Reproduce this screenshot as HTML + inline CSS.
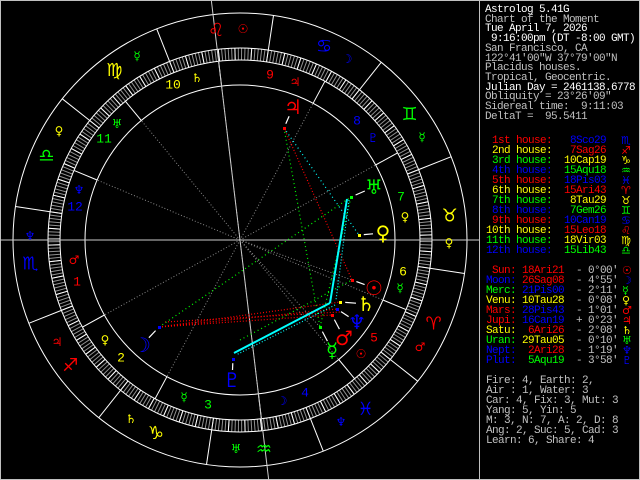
<!DOCTYPE html>
<html><head><meta charset="utf-8"><style>
html,body{margin:0;padding:0;background:#000;}
#w{position:relative;width:640px;height:480px;overflow:hidden;background:#000;}
svg{position:absolute;left:0;top:0;}
.t{position:absolute;font-family:"Liberation Mono","DejaVu Sans Mono",monospace;font-size:11px;letter-spacing:-0.6px;line-height:10px;white-space:pre;color:#c0c0c0;}
.g{position:absolute;font-family:"DejaVu Sans",sans-serif;font-size:11px;line-height:10px;}
.W{color:#fff}.R{color:#f00}.Y{color:#ff0}.G{color:#0f0}.B{color:#00f}.L{color:#c0c0c0}
</style></head><body><div id="w">
<svg id="s" width="640" height="480" xmlns="http://www.w3.org/2000/svg"></svg>
<div class="t" style="left:485px;top:6px;line-height:9.7px"><span class="W">Astrolog 5.41G</span>
Chart of the Moment
<span class="W">Tue April 7, 2026</span>
<span class="W"> 9:16:00pm (DT -8:00 GMT)</span>
San Francisco, CA
122°41'00"W 37°79'00"N
Placidus houses.
Tropical, Geocentric.
<span class="W">Julian Day = 2461138.6778</span>
Obliquity = 23°26'09"
Sidereal time:  9:11:03
DeltaT =  95.5411</div>
<div class="t" style="left:486px;top:136px"><span class="R"> 1st house:</span>  <span class="B"> 8Sco29</span>
<span class="Y"> 2nd house:</span>  <span class="R"> 7Sag26</span>
<span class="G"> 3rd house:</span>  <span class="Y">10Cap19</span>
<span class="B"> 4th house:</span>  <span class="G">15Aqu18</span>
<span class="R"> 5th house:</span>  <span class="B">18Pis03</span>
<span class="Y"> 6th house:</span>  <span class="R">15Ari43</span>
<span class="G"> 7th house:</span>  <span class="Y"> 8Tau29</span>
<span class="B"> 8th house:</span>  <span class="G"> 7Gem26</span>
<span class="R"> 9th house:</span>  <span class="B">10Can19</span>
<span class="Y">10th house:</span>  <span class="R">15Leo18</span>
<span class="G">11th house:</span>  <span class="Y">18Vir03</span>
<span class="B">12th house:</span>  <span class="G">15Lib43</span></div>
<div class="g" style="left:621px;top:136px"><span class="B">♏</span><br><span class="R">♐</span><br><span class="Y">♑</span><br><span class="G">♒</span><br><span class="B">♓</span><br><span class="R">♈</span><br><span class="Y">♉</span><br><span class="G">♊</span><br><span class="B">♋</span><br><span class="R">♌</span><br><span class="Y">♍</span><br><span class="G">♎</span></div>
<div class="t" style="left:486px;top:266px"><span class="R"> Sun:</span> <span class="R">18Ari21</span>  - 0°00'
<span class="B">Moon:</span> <span class="R">26Sag08</span>  - 4°55'
<span class="G">Merc:</span> <span class="B">21Pis00</span>  - 2°11'
<span class="Y">Venu:</span> <span class="Y">10Tau28</span>  - 0°08'
<span class="R">Mars:</span> <span class="B">28Pis43</span>  - 1°01'
<span class="R">Jupi:</span> <span class="B">16Can19</span>  + 0°23'
<span class="Y">Satu:</span> <span class="R"> 6Ari26</span>  - 2°08'
<span class="G">Uran:</span> <span class="Y">29Tau05</span>  - 0°10'
<span class="B">Nept:</span> <span class="R"> 2Ari28</span>  - 1°19'
<span class="B">Plut:</span> <span class="G"> 5Aqu19</span>  - 3°58'</div>
<div class="g" style="left:622px;top:266px"><span class="R">☉</span><br><span class="B">☽</span><br><span class="G">☿</span><br><span class="Y">♀</span><br><span class="R">♂</span><br><span class="R">♃</span><br><span class="Y">♄</span><br><span class="G">♅</span><br><span class="B">♆</span><br><span class="B">♇</span></div>
<div class="t" style="left:486px;top:376px">Fire: 4, Earth: 2,
Air : 1, Water: 3
Car: 4, Fix: 3, Mut: 3
Yang: 5, Yin: 5
M: 3, N: 7, A: 2, D: 8
Ang: 2, Suc: 5, Cad: 3
Learn: 6, Share: 4</div>
</div>
<script>
var s=document.getElementById('s'),h='';
var cx=240,cy=240,asc=218.48,D=Math.PI/180;
function P(L,r){var t=(180+L-asc)*D;return [cx+r*Math.cos(t),cy-r*Math.sin(t)];}
function ln(a,b,c,w,da){h+='<line x1="'+a[0].toFixed(1)+'" y1="'+a[1].toFixed(1)+'" x2="'+b[0].toFixed(1)+'" y2="'+b[1].toFixed(1)+'" stroke="'+c+'" stroke-width="'+(w||1)+'"'+(da?' stroke-dasharray="'+da+'"':'')+'/>';}
function tx(x,y,t,c,f,fam){h+='<text x="'+x+'" y="'+y+'" fill="'+c+'" font-size="'+f+'" text-anchor="middle" dominant-baseline="central" font-family="'+(fam||'DejaVu Sans,sans-serif')+'">'+t+'</text>';}
h+='<rect x="0.5" y="0.5" width="639" height="479" fill="none" stroke="#c0c0c0"/>';
h+='<line x1="479.5" y1="0" x2="479.5" y2="480" stroke="#c0c0c0"/>';
for(var i=0;i<360;i++){ln(P(i,180),P(i,192),'#909090',1);}
for(var i=0;i<360;i+=5){ln(P(i,180),P(i,192),'#fff',1);}
[227,192,180,155].forEach(function(r){h+='<circle cx="240" cy="240" r="'+r+'" fill="none" stroke="#fff"/>';});
for(var i=0;i<12;i++){ln(P(i*30,192),P(i*30,227),'#fff');}
var cusps=[218.48,247.43,280.32,315.3,348.05,15.72,38.48,67.43,100.32,135.3,168.05,195.72];
cusps.forEach(function(L){ln(P(L,155),P(L,180),'#fff');ln([cx,cy],P(L,155),'#888',1,'1 2');});
ln([0,240],[479,240],'#ccc');ln(P(135.3,250),P(315.3,250),'#ccc');
var sg=['♈','♉','♊','♋','♌','♍','♎','♏','♐','♑','♒','♓'],sc=['#f00','#ff0','#0f0','#00f'];
for(var i=0;i<12;i++){var p=P(i*30+15,211);tx(p[0],p[1],sg[i],sc[i%4],18);}
var hc=['#f00','#ff0','#0f0','#00f'];
[[77,282],[121,358],[208,405],[305,393],[374,338],[403,272],[401,197],[357,121],[270,75],[173,85],[104,139],[75,207]].forEach(function(p,i){tx(p[0],p[1],''+(i+1),hc[i%4],13,'Liberation Mono,monospace');});
var sm=[[137,56,'☿','#0f0'],[197,78,'♄','#ff0'],[117,124,'♅','#0f0'],[59,131,'♀','#ff0'],[79,190,'♆','#00f'],[30,236,'♆','#00f'],[243,29,'☉','#f00'],[347,59,'☽','#00f'],[295,82,'♃','#f00'],[373,138,'♇','#00f'],[422,137,'☿','#0f0'],[405,217,'♀','#ff0'],[74,260,'♂','#f00'],[57,342,'♃','#f00'],[105,340,'♀','#ff0'],[184,397,'☿','#0f0'],[131,419,'♄','#ff0'],[236,449,'♅','#0f0'],[449,243,'♀','#ff0'],[400,288,'☿','#0f0'],[420,347,'♂','#f00'],[361,354,'☉','#f00'],[282,401,'☽','#00f'],[341,422,'♆','#00f']];
sm.forEach(function(a){tx(a[0],a[1],a[2],a[3],12);});
var J=[284,128],Su=[352,280],Mo=[159,327],Me=[320,327],Ve=[359,235],Ma=[332,315],Sa=[340,302],Ur=[351,197],Ne=[337,309],Pl=[233,359];
ln(J,Su,'#f00',1.2,'1 2');ln(Mo,Ma,'#f00',1.2,'1 2');ln(Mo,Ne,'#f00',1.2,'1 2');ln(Mo,Sa,'#f00',1.2,'1 2');ln([165,322],[340,312],'#f00',1.2,'1 2');
ln(J,Me,'#0f0',1.2,'1 3');ln(Mo,Ur,'#0f0',1.2,'1 3');ln(Me,[351,197],'#0f0',1.2,'1 3');ln([240,340],Su,'#0f0',1.2,'1 3');
ln(J,Ve,'#0ff',1.2,'1 3');ln([349,200],[336,300],'#0ff',1.2,'1 2');ln([335,305],[236,355],'#0ff',1.2,'1 2');
ln([347,199],[330,303],'#0ff',2);ln([330,303],[234,353],'#0ff',2);
ln([240,240],Su,'#888',1,'1 2');ln([240,240],Me,'#888',1,'1 2');
var bg=[[293,107,'♃','#f00',J],[374,187,'♅','#0f0',Ur],[383,233,'♀','#ff0',Ve],[374,288,'☉','#f00',Su],[366,304,'♄','#ff0',Sa],[357,322,'♆','#00f',Ne],[344,338,'♂','#f00',Ma],[332,350,'☿','#0f0',Me],[232,380,'♇','#00f',Pl],[142,345,'☽','#00f',Mo]];
bg.forEach(function(a){var m=a[4],dx=a[0]-m[0],dy=a[1]-m[1],d=Math.sqrt(dx*dx+dy*dy),k=(d-10)/d;ln([m[0]+dx*0.2,m[1]+dy*0.2],[m[0]+dx*k,m[1]+dy*k],'#fff',1.2);h+='<rect x="'+(m[0]-1)+'" y="'+(m[1]-1)+'" width="3" height="3" fill="'+a[3]+'"/>';tx(a[0],a[1],a[2],a[3],20);});
s.innerHTML=h;
</script>
</body></html>
